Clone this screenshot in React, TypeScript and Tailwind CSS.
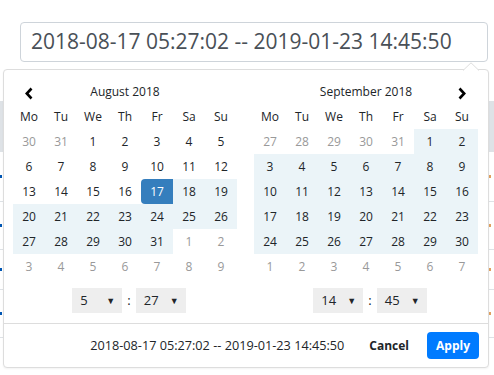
import React from "react";

type CellKind = "off" | "day" | "range" | "start";
type Cell = { n: number; kind: CellKind };

const dayNames = ["Mo", "Tu", "We", "Th", "Fr", "Sa", "Su"];

const cellClass: Record<CellKind, string> = {
  off: "text-[#999]",
  day: "text-[#212529]",
  range: "bg-[#ebf4f8] text-[#212529]",
  start: "bg-[#357ebd] text-white rounded-l-[4px]",
};

function buildAugust(): Cell[][] {
  const days: Cell[] = [
    { n: 30, kind: "off" },
    { n: 31, kind: "off" },
  ];
  for (let d = 1; d <= 31; d++) {
    days.push({ n: d, kind: d < 17 ? "day" : d === 17 ? "start" : "range" });
  }
  for (let d = 1; d <= 9; d++) days.push({ n: d, kind: "off" });
  const weeks: Cell[][] = [];
  for (let i = 0; i < 6; i++) weeks.push(days.slice(i * 7, i * 7 + 7));
  return weeks;
}

function buildSeptember(): Cell[][] {
  const days: Cell[] = [27, 28, 29, 30, 31].map((n) => ({ n, kind: "off" as CellKind }));
  for (let d = 1; d <= 30; d++) days.push({ n: d, kind: "range" });
  for (let d = 1; d <= 7; d++) days.push({ n: d, kind: "off" });
  const weeks: Cell[][] = [];
  for (let i = 0; i < 6; i++) weeks.push(days.slice(i * 7, i * 7 + 7));
  return weeks;
}

function Chevron({ dir }: { dir: "left" | "right" }) {
  return (
    <svg width="10" height="13" viewBox="0 0 10 13" className="mt-[3px]">
      <path
        d={dir === "left" ? "M7.5 1.5 L2.8 6.5 L7.5 11.5" : "M2.5 1.5 L7.2 6.5 L2.5 11.5"}
        fill="none"
        stroke="#000"
        strokeWidth="2.6"
      />
    </svg>
  );
}

function TimeSelect({ value }: { value: string }) {
  return (
    <div className="flex h-[25px] w-[50px] items-center justify-between bg-[#eee] pl-[8px] pr-[7px] text-[13px] text-[#212529]">
      <span>{value}</span>
      <span className="text-[9px] leading-none">▼</span>
    </div>
  );
}

function Calendar({
  title,
  weeks,
  prev,
  next,
  hour,
  minute,
}: {
  title: string;
  weeks: Cell[][];
  prev?: boolean;
  next?: boolean;
  hour: string;
  minute: string;
}) {
  return (
    <div className="w-[224px]">
      <div className="grid h-[25px] grid-cols-7 items-center text-[12px] text-[#212529]">
        <div className="flex justify-center">{prev && <Chevron dir="left" />}</div>
        <div className="col-span-5 text-center">{title}</div>
        <div className="flex justify-center">{next && <Chevron dir="right" />}</div>
      </div>
      <div className="grid grid-cols-7 text-[12px] leading-[25px] text-[#212529]">
        {dayNames.map((d) => (
          <div key={d} className="h-[25px] text-center">
            {d}
          </div>
        ))}
      </div>
      {weeks.map((w, i) => (
        <div key={i} className="grid grid-cols-7 text-[12px] leading-[25px]">
          {w.map((c, j) => (
            <div key={j} className={`h-[25px] text-center ${cellClass[c.kind]}`}>
              {c.n}
            </div>
          ))}
        </div>
      ))}
      <div className="mt-[9px] flex items-center justify-center gap-[5px] pl-[8px]">
        <TimeSelect value={hour} />
        <span className="text-[13px] text-[#212529]">:</span>
        <TimeSelect value={minute} />
      </div>
    </div>
  );
}

export default function App() {
  const range = "2018-08-17 05:27:02 -- 2019-01-23 14:45:50";

  return (
    <div className="relative h-[375px] w-[494px] overflow-hidden bg-white font-['Open_Sans',sans-serif]">
      <div className="pl-[20px] pt-[22px]">
        <div className="flex h-[40px] w-[468px] items-center rounded-[4px] border border-[#ced4da] pl-[10px] text-[21px] text-[#495057]">
          {range}
        </div>
      </div>

      {/* table behind the picker */}
      <div className="mt-[39px]">
        <div className="h-[51px] bg-[#dee2e6]" />
        {[50, 48, 40, 48].map((h, i) => (
          <div
            key={i}
            className="flex items-center justify-between border-b border-[#dee2e6]"
            style={{ height: h }}
          >
            <span className="h-[3px] w-[2px] bg-[#0056b3]" />
            <span className="mr-[3px] h-[3px] w-[2px] bg-[#e0a060]" />
          </div>
        ))}
      </div>

      {/* picker dropdown */}
      <div className="absolute left-[3px] top-[69px] w-[486px] rounded-[4px] border border-[#ddd] bg-white shadow-[0_1px_2px_rgba(0,0,0,0.05)]">
        <svg className="absolute -top-[8px] left-[459px]" width="16" height="9" viewBox="0 0 16 9">
          <path d="M0 8.5 L8 0.8 L16 8.5" fill="#fff" stroke="#ddd" strokeWidth="1" />
        </svg>
        <div className="flex gap-[17px] pl-[9px] pr-[10px] pt-[9px]">
          <Calendar title="August 2018" weeks={buildAugust()} prev hour="5" minute="27" />
          <Calendar title="September 2018" weeks={buildSeptember()} next hour="14" minute="45" />
        </div>
        <div className="mt-[10px] flex items-center justify-end border-t border-[#ddd] py-[8px] pr-[9px]">
          <span className="text-[12.7px] text-[#212529]">{range}</span>
          <span className="ml-[25px] text-[12px] font-bold text-[#212529]">Cancel</span>
          <span className="ml-[18px] flex h-[27px] items-center rounded-[4px] bg-[#007bff] px-[9px] text-[12px] font-bold text-white">
            Apply
          </span>
        </div>
      </div>
    </div>
  );
}
